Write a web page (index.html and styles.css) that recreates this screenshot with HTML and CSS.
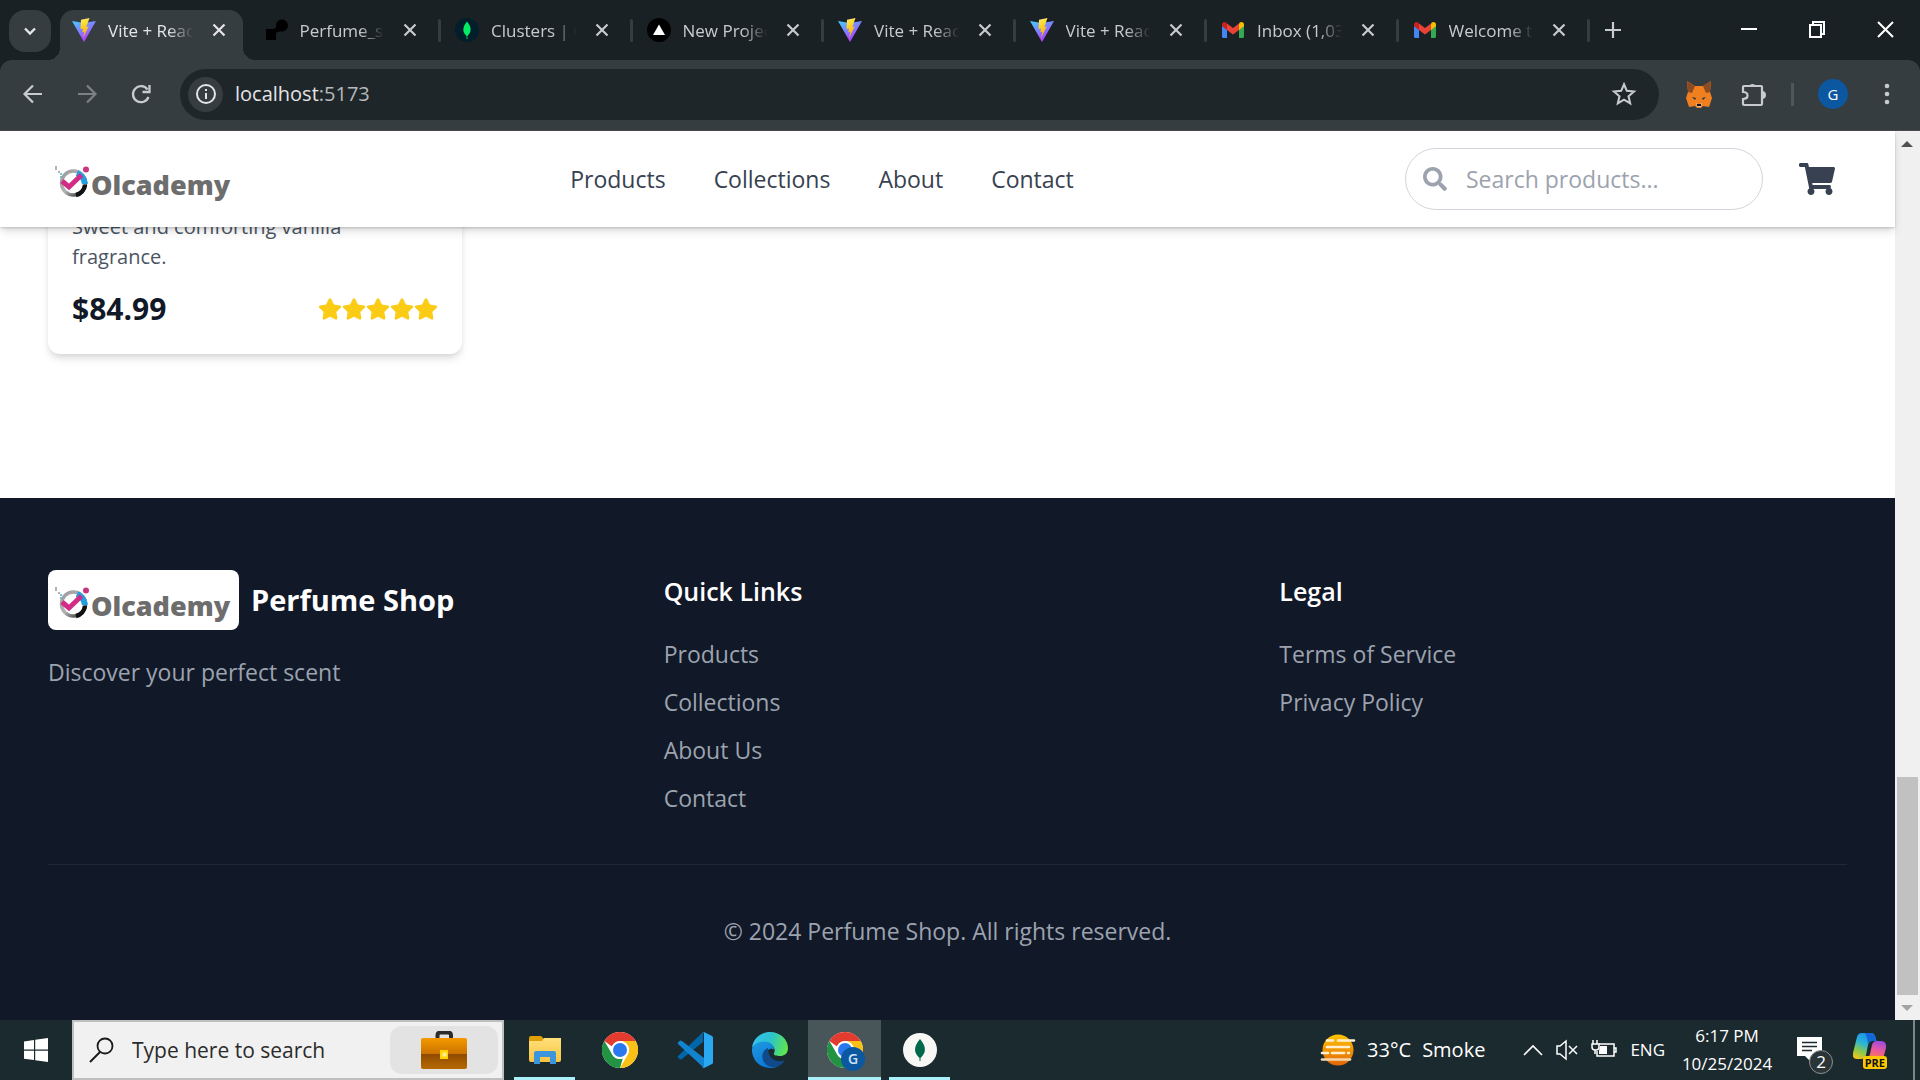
FILE: index.html
```html
<!DOCTYPE html>
<html lang="en">
<head>
<meta charset="utf-8">
<title>Perfume Shop</title>
<link rel="stylesheet" href="styles.css">
</head>
<body>
<svg class="sprite" aria-hidden="true">
  <defs>
    <linearGradient id="vite-a" x1="0" y1="0" x2="0.6" y2="1"><stop offset="0" stop-color="#41d1ff"/><stop offset="1" stop-color="#bd34fe"/></linearGradient>
    <linearGradient id="vite-b" x1="0.4" y1="0" x2="0.6" y2="1"><stop offset="0" stop-color="#ffea83"/><stop offset="0.2" stop-color="#ffdd35"/><stop offset="1" stop-color="#ffa800"/></linearGradient>
    <linearGradient id="case-a" x1="0" y1="0" x2="0" y2="1"><stop offset="0" stop-color="#f59a00"/><stop offset="1" stop-color="#c46d00"/></linearGradient>
    <linearGradient id="case-b" x1="0" y1="0" x2="0" y2="1"><stop offset="0" stop-color="#8f4a00"/><stop offset="1" stop-color="#b86a00"/></linearGradient>
    <linearGradient id="folder" x1="0" y1="0" x2="0" y2="1"><stop offset="0" stop-color="#ffe07a"/><stop offset="1" stop-color="#f8c441"/></linearGradient>
    <linearGradient id="edge-a" x1="0" y1="0.3" x2="1" y2="0.5"><stop offset="0" stop-color="#35c1f1"/><stop offset="0.5" stop-color="#2cc3cb"/><stop offset="1" stop-color="#5fe64b"/></linearGradient>
    <linearGradient id="edge-b" x1="0" y1="0" x2="0.5" y2="1"><stop offset="0" stop-color="#1f9ae0"/><stop offset="1" stop-color="#0b78d4"/></linearGradient>
    <linearGradient id="sun" x1="0" y1="0" x2="0" y2="1"><stop offset="0" stop-color="#ffc400"/><stop offset="1" stop-color="#e2660a"/></linearGradient>
    <linearGradient id="cop-a" x1="0.6" y1="0" x2="0.2" y2="1"><stop offset="0" stop-color="#1b8fe8"/><stop offset="0.4" stop-color="#2cb5d8"/><stop offset="0.7" stop-color="#8cc84b"/><stop offset="1" stop-color="#f3c51c"/></linearGradient>
    <linearGradient id="cop-b" x1="0.6" y1="0" x2="0.3" y2="1"><stop offset="0" stop-color="#a04be0"/><stop offset="0.5" stop-color="#ec5a9a"/><stop offset="1" stop-color="#f98048"/></linearGradient>
    <linearGradient id="ring" x1="0" y1="0" x2="1" y2="1"><stop offset="0" stop-color="#9a9a9a"/><stop offset="0.5" stop-color="#b4b4b4"/><stop offset="1" stop-color="#1a1a1a"/></linearGradient>
  </defs>
  <symbol id="i-vite" viewBox="0 0 24 24">
    <path d="M0 3 12 5 24 3 12 24z" fill="url(#vite-a)"/>
    <path d="M17.500 0 9 1.700 8.500 11 11 10.500 10.300 14.200 12.300 13.700 11.200 19.500 16.700 8.500 14.300 9z" fill="url(#vite-b)"/>
  </symbol>
  <symbol id="i-render" viewBox="0 0 24 24"><path d="M2 11h7c2 0 3-1 3-3a6 6 0 1 1 5.500 5.500C14 13.500 12 14 12 17v5H2z" fill="#000"/></symbol>
  <symbol id="i-leaf" viewBox="0 0 24 24"><circle cx="12" cy="12" r="12" fill="#021e2b"/><path d="M12 3.500c5 6 4.500 11 .4 14.500V21h-.8v-3C7.500 14.500 7 9.500 12 3.500z" fill="#00ed64"/></symbol>
  <symbol id="i-vercel" viewBox="0 0 24 24"><circle cx="12" cy="12" r="12" fill="#000"/><path d="M12 6.500 18 17H6z" fill="#fff"/></symbol>
  <symbol id="i-gmail" viewBox="0 0 24 24">
    <path d="M1 7v11.500c0 .8.700 1.500 1.500 1.500H6V9z" fill="#4285f4"/><path d="M18 20h3.500c.8 0 1.500-.7 1.500-1.500V7l-5 3z" fill="#34a853"/>
    <path d="M18 6v6l5-3.700V6.500c0-2.300-2.500-3.300-4.300-2z" fill="#fbbc04"/><path d="M6 12V5.500L12 10l6-4.500V12l-6 4.500z" fill="#ea4335"/><path d="M1 6.500v1.800L6 12V5.500l-1-.9C3.300 3.200 1 4.300 1 6.500z" fill="#c5221f"/>
  </symbol>
  <symbol id="i-x" viewBox="0 0 24 24"><path d="M6.500 6.500 17.500 17.500M17.500 6.500 6.500 17.500" stroke="currentColor" stroke-width="2.200" fill="none"/></symbol>
  <symbol id="i-star" viewBox="0 0 576 512"><path fill="currentColor" d="M259.300 17.800 194 150.200 47.900 171.500c-26.200 3.800-36.700 36.100-17.700 54.600l105.700 103-25 145.500c-4.500 26.300 23.200 46 46.400 33.700L288 439.600l130.700 68.700c23.200 12.200 50.900-7.400 46.400-33.700l-25-145.500 105.700-103c19-18.500 8.500-50.800-17.700-54.600L382 150.200 316.700 17.800c-11.700-23.600-45.600-23.900-57.400 0z"/></symbol>
  <symbol id="i-chrome" viewBox="0 0 36 36">
    <circle cx="18" cy="18" r="18" fill="#fff"/>
    <path d="M18 0a18 18 0 0 1 15.600 9H18a9 9 0 0 0-8 5.500L2.400 9A18 18 0 0 1 18 0z" fill="#e33b2e"/>
    <path d="M2.400 9 10.200 22.500A9 9 0 0 0 18 27c1 0 2-.2 2.800-.4L18 36A18 18 0 0 1 2.400 9z" fill="#229342"/>
    <path d="M33.600 9A18 18 0 0 1 18 36l7.800-13.500A9 9 0 0 0 18 9z" fill="#fbc016"/>
    <circle cx="18" cy="18" r="9" fill="#fff"/><circle cx="18" cy="18" r="7" fill="#2a78ee"/>
  </symbol>
  <symbol id="i-brand" viewBox="0 0 191 60">
    <path d="M8 17v4M11 22v2" stroke="#999" stroke-width="1.500"/><path d="M12 28h3M12 25h2" stroke="#36b7d8" stroke-width="1.500"/>
    <circle cx="25.500" cy="34" r="12" fill="#fff" stroke="url(#ring)" stroke-width="3.500"/>
    <path d="M29 24q7 3 8 11" stroke="#229fe0" stroke-width="6" fill="none"/>
    <path d="M37 36a12 12 0 0 1-9 10" stroke="#111" stroke-width="4.500" fill="none"/>
    <path d="M14 32 21 38 33.500 26" stroke="#d32c86" stroke-width="5" fill="none"/><circle cx="38" cy="20.500" r="3" fill="#c9367f"/>
    <text x="43" y="46" class="brand-text">Olcademy</text>
  </symbol>
</svg>

<div class="screen">
  <header class="tabstrip">
    <button class="tab-search" aria-label="Search tabs"><svg width="24" height="24" viewBox="0 0 24 24"><path d="m7 9.500 5 5 5-5" fill="none" stroke="#e3e5e6" stroke-width="2.400"/></svg></button>
    <div class="tabs">
      <div class="tab tab-active"><svg class="fav"><use href="#i-vite"/></svg><span class="tab-title">Vite + Reac</span><button class="tab-close" aria-label="Close"><svg><use href="#i-x"/></svg></button></div>
      <div class="tab"><svg class="fav"><use href="#i-render"/></svg><span class="tab-title">Perfume_sh</span><button class="tab-close" aria-label="Close"><svg><use href="#i-x"/></svg></button></div>
      <div class="tab"><svg class="fav"><use href="#i-leaf"/></svg><span class="tab-title">Clusters | C</span><button class="tab-close" aria-label="Close"><svg><use href="#i-x"/></svg></button></div>
      <div class="tab"><svg class="fav"><use href="#i-vercel"/></svg><span class="tab-title">New Projec</span><button class="tab-close" aria-label="Close"><svg><use href="#i-x"/></svg></button></div>
      <div class="tab"><svg class="fav"><use href="#i-vite"/></svg><span class="tab-title">Vite + Reac</span><button class="tab-close" aria-label="Close"><svg><use href="#i-x"/></svg></button></div>
      <div class="tab"><svg class="fav"><use href="#i-vite"/></svg><span class="tab-title">Vite + Reac</span><button class="tab-close" aria-label="Close"><svg><use href="#i-x"/></svg></button></div>
      <div class="tab"><svg class="fav"><use href="#i-gmail"/></svg><span class="tab-title">Inbox (1,03</span><button class="tab-close" aria-label="Close"><svg><use href="#i-x"/></svg></button></div>
      <div class="tab"><svg class="fav"><use href="#i-gmail"/></svg><span class="tab-title">Welcome t</span><button class="tab-close" aria-label="Close"><svg><use href="#i-x"/></svg></button></div>
    </div>
    <button class="tab-new" aria-label="New tab"><svg width="24" height="24" viewBox="0 0 24 24"><path d="M12 4v16M4 12h16" stroke="#c7cbcd" stroke-width="2.200"/></svg></button>
    <div class="win-controls">
      <button aria-label="Minimize"><svg width="24" height="24" viewBox="0 0 24 24"><path d="M4 12h16" stroke="#fff" stroke-width="2"/></svg></button>
      <button aria-label="Restore"><svg width="24" height="24" viewBox="0 0 24 24"><path d="M5 8h11v12H5zM8 8V5h11v12h-3" fill="none" stroke="#fff" stroke-width="2"/></svg></button>
      <button aria-label="Close window"><svg width="24" height="24" viewBox="0 0 24 24"><path d="m5 5 15 15M20 5 5 20" stroke="#fff" stroke-width="2"/></svg></button>
    </div>
  </header>

  <div class="toolbar-back">
  <div class="toolbar">
    <button class="tool" aria-label="Back"><svg width="24" height="24" viewBox="0 0 24 24"><path d="M21 12H4M12 3.500 3.500 12l8.500 8.500" fill="none" stroke="#c7cbcd" stroke-width="2.200"/></svg></button>
    <button class="tool" aria-label="Forward"><svg width="24" height="24" viewBox="0 0 24 24"><path d="M3 12h17M12 3.500 20.500 12 12 20.500" fill="none" stroke="#7c8183" stroke-width="2.200"/></svg></button>
    <button class="tool" aria-label="Reload"><svg width="24" height="24" viewBox="0 0 24 24"><path d="M19.500 15A8 8 0 1 1 18.500 7.500M20.500 3v7h-7" fill="none" stroke="#c7cbcd" stroke-width="2.300"/></svg></button>
    <div class="omnibox">
      <button class="site-info" aria-label="Site information"><svg width="24" height="24" viewBox="0 0 24 24"><circle cx="12" cy="12" r="9" fill="none" stroke="#e3e5e6" stroke-width="2"/><path d="M12 11v6M12 7v2" stroke="#e3e5e6" stroke-width="2"/></svg></button>
      <span class="url">localhost<span class="port">:5173</span></span>
      <button class="bookmark" aria-label="Bookmark"><svg width="26" height="26" viewBox="0 0 24 24"><path d="m12 3 2.600 6.100 6.600.6-5 4.400 1.500 6.500L12 17.200l-5.700 3.400 1.500-6.500-5-4.400 6.600-.6z" fill="none" stroke="#c7cbcd" stroke-width="1.900"/></svg></button>
    </div>
    <button class="tool ext" aria-label="Wallet"><svg width="26" height="28" viewBox="0 0 26 28"><path d="m1 1 8 5h8l8-5-1 11 2 6-3 9-6-1-2 2h-4l-2-2-6 1-3-9 2-6z" fill="#f0801f"/><path d="m1 1 8 5-3 7-4-1zM25 1l-8 5 3 7 4-1z" fill="#8e4a20"/><path d="m6 17 4 1-1 2zM20 17l-4 1 1 2z" fill="#233447"/><path d="m10 23 1 4h4l1-4-2 1h-2z" fill="#d5bfb2"/><path d="M11 24h4v2h-4z" fill="#161616"/></svg></button>
    <button class="tool ext" aria-label="Extensions"><svg width="28" height="28" viewBox="0 0 28 28"><path d="M5 6h17q1 0 1 1v17q0 1-1 1H5q-1 0-1-1v-5c6 0 6-7 0-7V7q0-1 1-1z" fill="none" stroke="#c7cbcd" stroke-width="2.200"/><path d="M10 6a4 4 0 0 1 7 0zM23 11a4 4 0 0 1 0 8z" fill="#c7cbcd"/></svg></button>
    <span class="tool-sep"></span>
    <button class="avatar" aria-label="Profile">G</button>
    <button class="tool kebab" aria-label="Menu"><svg width="6" height="22" viewBox="0 0 6 22"><g fill="#c7cbcd"><circle cx="3" cy="3" r="2.300"/><circle cx="3" cy="11" r="2.300"/><circle cx="3" cy="19" r="2.300"/></g></svg></button>
  </div>
  </div>

  <div class="window">
    <div class="page">
      <nav class="nav">
        <svg class="brand" role="img" aria-label="Olcademy"><use href="#i-brand"/></svg>
        <div class="nav-links"><a href="#">Products</a><a href="#">Collections</a><a href="#">About</a><a href="#">Contact</a></div>
        <div class="nav-actions">
          <label class="search">
            <svg width="24" height="24" viewBox="0 0 512 512"><path fill="#9ca3af" d="M505 442.700 405.300 343c-4.500-4.500-10.600-7-17-7H372c27.600-35.300 44-79.700 44-128C416 93.100 322.900 0 208 0S0 93.100 0 208s93.100 208 208 208c48.300 0 92.700-16.400 128-44v16.300c0 6.400 2.500 12.500 7 17l99.700 99.700c9.400 9.400 24.600 9.400 33.900 0l28.300-28.300c9.400-9.400 9.400-24.600.1-34zM208 336c-70.700 0-128-57.200-128-128 0-70.700 57.200-128 128-128 70.700 0 128 57.200 128 128 0 70.700-57.200 128-128 128z"/></svg>
            <input type="text" placeholder="Search products..." aria-label="Search products">
          </label>
          <button class="cart" aria-label="Cart"><svg width="36" height="32" viewBox="0 0 576 512"><path fill="#374151" d="m528.100 301.300 47.300-208C578.800 78.300 567.400 64 552 64H159.200l-9.200-44.800C147.800 8 137.900 0 126.500 0H24C10.700 0 0 10.700 0 24v16c0 13.300 10.700 24 24 24h69.900l70.200 343.400C147.300 417.100 136 435.200 136 456c0 30.900 25.100 56 56 56s56-25.100 56-56c0-15.700-6.400-29.800-16.800-40h209.600C430.400 426.200 424 440.300 424 456c0 30.900 25.100 56 56 56s56-25.100 56-56c0-22.200-12.900-41.300-31.600-50.400l5.500-24.300c3.400-15-8-29.300-23.400-29.300H218.100l-6.500-32h293.100c11.200 0 20.900-7.800 23.400-18.700z"/></svg></button>
        </div>
      </nav>

      <main class="products">
        <article class="card">
          <p class="card-text">Sweet and comforting vanilla fragrance.</p>
          <div class="card-row">
            <span class="price">$84.99</span>
            <span class="stars"><svg><use href="#i-star"/></svg><svg><use href="#i-star"/></svg><svg><use href="#i-star"/></svg><svg><use href="#i-star"/></svg><svg><use href="#i-star"/></svg></span>
          </div>
        </article>
      </main>

      <footer class="footer">
        <div class="footer-grid">
          <div>
            <div class="footer-brand"><svg class="brand brand-box" role="img" aria-label="Olcademy"><use href="#i-brand"/></svg><h2>Perfume Shop</h2></div>
            <p class="tagline">Discover your perfect scent</p>
          </div>
          <div>
            <h3>Quick Links</h3>
            <ul><li><a href="#">Products</a></li><li><a href="#">Collections</a></li><li><a href="#">About Us</a></li><li><a href="#">Contact</a></li></ul>
          </div>
          <div>
            <h3>Legal</h3>
            <ul><li><a href="#">Terms of Service</a></li><li><a href="#">Privacy Policy</a></li></ul>
          </div>
        </div>
        <p class="copyright">© 2024 Perfume Shop. All rights reserved.</p>
      </footer>
    </div>
    <div class="scrollbar" aria-hidden="true">
      <svg width="25" height="25" viewBox="0 0 25 25"><path d="m12 10 6 6H6z" fill="#505050"/></svg>
      <div class="track"><div class="thumb"></div></div>
      <svg width="25" height="25" viewBox="0 0 25 25"><path d="M6 10h12l-6 6z" fill="#a3a3a3"/></svg>
    </div>
  </div>

  <div class="taskbar">
    <button class="start" aria-label="Start"><svg width="26" height="26" viewBox="0 0 26 26"><path d="M1 4.500 11 3v9.500H1zM12.200 2.800 25 1v11.500H12.200zM1 13.700h10V23L1 21.700zM12.200 13.700H25V25l-12.800-1.800z" fill="#fff"/></svg></button>
    <div class="task-search">
      <svg width="26" height="26" viewBox="0 0 26 26"><circle cx="17" cy="9" r="7.500" fill="none" stroke="#1a1a1a" stroke-width="1.800"/><path d="M12 15 2 25" stroke="#1a1a1a" stroke-width="2"/></svg>
      <input type="text" placeholder="Type here to search" aria-label="Type here to search">
      <button class="highlight" aria-label="Search highlights"><svg width="46" height="38" viewBox="0 0 46 38"><path d="M16.500 8V4q0-2.500 3-2.500h7.500q3 0 3 2.500v4" fill="none" stroke="#2b2b2b" stroke-width="4"/><rect y="7" width="46" height="18" rx="2" fill="url(#case-a)"/><path d="M0 23h46v13q0 2-2 2H2q-2 0-2-2z" fill="url(#case-b)"/><rect x="19" y="19" width="8" height="9" fill="#ffd400"/><rect x="21.500" y="21.500" width="4" height="4" fill="#ffef9a"/></svg></button>
    </div>
    <div class="apps">
      <button class="app app-open" aria-label="File Explorer"><svg width="32" height="28" viewBox="0 0 32 28"><path d="M0 2q0-2 2-2h10l3 3v4H0z" fill="#e0a008"/><path d="M0 5h13l2-3h17v22q0 2-2 2H2q-2 0-2-2z" fill="url(#folder)"/><path d="M5 28V17q0-2 2-2h18q2 0 2 2v11h-6v-7H11v7z" fill="#3b96de"/></svg></button>
      <button class="app" aria-label="Chrome"><svg width="36" height="36"><use href="#i-chrome"/></svg></button>
      <button class="app" aria-label="Visual Studio Code"><svg width="36" height="36" viewBox="0 0 36 36"><path d="M1 24 26 0v10L5 27q-1.500 1-2.500 0l-1.500-1.500q-.8-.8 0-1.500z" fill="#0065a9"/><path d="M1 12q-.8-.8 0-1.500L2.500 9Q3.500 8 5 9l22 17v10z" fill="#1284cf"/><path d="M26 0q.5-.3 1 0l8 4q1 .5 1 1.500v25q0 1-1 1.500l-8 4q-1 .3-2-.5 2 .5 2-1.500V2q0-1.500-1-2z" fill="#2aa9f2"/></svg></button>
      <button class="app" aria-label="Edge"><svg width="36" height="36" viewBox="0 0 36 36"><path d="M0 16C1 6 9 0 18 0c11 0 18 8 18 16 0 6-4 8-8 8-4 0-7-1-6-3 2-3 0-10-9-10C7 11 2 13 0 16z" fill="url(#edge-a)"/><path d="M0 17C1 13 6 9.500 12 9.500c7 0 10 4 10 8-3-2-8 0-8 6s5 11 12 11c-3 1.500-5 1.500-8 1.500A18 18 0 0 1 0 17z" fill="url(#edge-b)"/><path d="M16 16c-8 3-8 16 3 19 6 1 11-2 14-7-6 3-17 1-17-12z" fill="#114a8b"/></svg></button>
      <button class="app app-active" aria-label="Chrome, profile G"><svg width="36" height="36"><use href="#i-chrome"/></svg><span class="app-badge">G</span></button>
      <button class="app app-open" aria-label="MongoDB Compass"><svg width="34" height="34" viewBox="0 0 34 34"><circle cx="17" cy="17" r="17" fill="#f7f7f5"/><path d="M17 6c7 8 6 14 .5 19v3h-1v-3C11 20 10 14 17 6z" fill="#00684a"/></svg></button>
    </div>
    <div class="tray">
      <button class="weather"><svg width="36" height="32" viewBox="0 0 36 32"><circle cx="18" cy="16" r="15.500" fill="url(#sun)"/><g stroke="#fff0cf" stroke-width="2.600" stroke-linecap="round"><path d="M7 6.500h6M18 6.500h16M7 13h22M12 19h12M28 19h1M2 19h6"/></g><path d="M2 25.500h28" stroke="#f5d7ae" stroke-width="2.600" stroke-linecap="round"/></svg><span>33°C</span><span>Smoke</span></button>
      <div class="tray-icons">
        <svg width="20" height="14" viewBox="0 0 20 14"><path d="m1 12 9-9 9 9" fill="none" stroke="#fff" stroke-width="1.600"/></svg>
        <svg width="22" height="22" viewBox="0 0 22 22"><path d="M1 7h3l6-5v18l-6-5H1zM13 7l8 8M21 7l-8 8" fill="none" stroke="#fff" stroke-width="1.500"/></svg>
        <svg width="26" height="22" viewBox="0 0 26 22"><path d="M8 5h15v12H6v-5M23 9h2v4h-2" fill="none" stroke="#fff" stroke-width="1.500"/><path d="M9 7h7v8H8v-3z" fill="#fff"/><path d="M2 1v4M6 1v4M1 5h7v3q0 3-3 3H4q-3 0-3-3zM4 11v4" fill="none" stroke="#fff" stroke-width="1.500"/></svg>
        <span>ENG</span>
      </div>
      <div class="clock"><span>6:17 PM</span><span>10/25/2024</span></div>
      <button class="notif" aria-label="Notifications"><svg width="26" height="26" viewBox="0 0 26 26"><path d="M0 0h25v19H14v6l-6-6H0z" fill="#fff"/><path d="M5 5.500h15M5 9.500h15M5 13.500h10" stroke="#1c2a2e" stroke-width="1.500"/></svg><span class="notif-count">2</span></button>
      <button class="copilot" aria-label="Copilot"><svg width="34" height="34" viewBox="0 0 34 34"><path d="M9 0h9q3 0 4 3l1.500 5H19q-3 0-4 4l-2 10q-1 4-5 4H4q-5 0-4-6L4 4q1-4 5-4z" fill="url(#cop-a)"/><path d="M12 0h6q3 0 4 3l1.500 5H19q-3 0-4 3-1-8-3-11z" fill="#1268d6"/><path d="M24 8h4q6 0 5 7l-3 11H13q3-1 4-5l2-9q1-4 5-4z" fill="url(#cop-b)"/></svg><span class="pre">PRE</span></button>
      <span class="show-desktop"></span>
    </div>
  </div>
</div>
</body>
</html>
```
FILE: styles.css
```css
* { box-sizing: border-box; }
body, h2, h3, p, ul { margin: 0; padding: 0; }
ul { list-style: none; }
a { color: inherit; text-decoration: none; }
button { border: 0; padding: 0; margin: 0; background: none; color: inherit; font: inherit; display: flex; align-items: center; justify-content: center; flex: none; }
input { font: inherit; color: inherit; border: 0; padding: 0; background: none; outline: 0; min-width: 0; }
svg { display: block; flex: none; }
body { font-family: "Open Sans", "Noto Sans", sans-serif; font-size: 23px; line-height: 36px; background: #fff; }
.sprite { position: absolute; width: 0; height: 0; }
.screen { display: flex; flex-direction: column; height: 100vh; overflow: hidden; }

/* tab strip */
.tabstrip { display: flex; height: 60px; flex: none; background: #1a2124; padding-left: 9px; font-size: 17px; color: #c7cbcd; }
.tab-search { width: 42px; height: 42px; margin: 10px 9px 0 0; border-radius: 16px; background: #363d40; }
.tabs { display: grid; grid-template-columns: repeat(8, minmax(0, 1fr)); width: 1532px; }
.tab { position: relative; display: flex; align-items: center; height: 40px; margin-top: 10px; padding: 0 21px 0 12px; }
.tab::after { content: ""; position: absolute; right: 2px; top: 9px; width: 3px; height: 23px; border-radius: 2px; background: #363d40; }
.fav { width: 24px; height: 24px; }
.tab-title { flex: 1; min-width: 0; margin-left: 12px; height: 24px; line-height: 26px; white-space: nowrap; overflow: hidden; -webkit-mask-image: linear-gradient(90deg, #000 68%, transparent 96%); mask-image: linear-gradient(90deg, #000 68%, transparent 96%); }
.tab-close { width: 24px; height: 24px; margin-left: 10px; }
.tab-close svg { width: 24px; height: 24px; }
.tab-active { height: 50px; margin-right: 9px; padding: 0 12px 10px; border-radius: 14px 14px 0 0; background: #363d40; color: #e3e5e6; }
.tab-active::before, .tab-active::after { content: ""; position: absolute; top: auto; bottom: 0; width: 12px; height: 12px; border-radius: 0; }
.tab-active::before { left: -12px; background: radial-gradient(circle at 0 0, transparent 12px, #363d40 12px); }
.tab-active::after { right: -12px; background: radial-gradient(circle at 100% 0, transparent 12px, #363d40 12px); }
.tab-new { width: 42px; height: 60px; }
.win-controls { display: flex; margin-left: auto; padding-right: 1px; }
.win-controls button { width: 68px; height: 58px; }

/* toolbar */
.toolbar-back { background: #1a2124; flex: none; }
.toolbar { display: flex; align-items: center; height: 71px; padding: 0 16px 2px 6px; background: #363d40; border-bottom: 1px solid #4a4a4c; border-radius: 12px 12px 0 0; }
.tool { width: 54px; height: 48px; }
.omnibox { display: flex; align-items: center; flex: 1; height: 51px; margin: 0 13px 0 12px; padding: 0 22px 0 8px; border-radius: 26px; background: #1f2629; color: #e3e5e6; font-size: 20px; }
.site-info { width: 35px; height: 35px; margin-right: 12px; border-radius: 50%; background: #363d40; }
.port { color: #b5b9bb; }
.bookmark { margin-left: auto; }
.tool-sep { width: 3px; height: 23px; margin: 0 24px 0 11px; background: #50575a; }
.avatar { width: 30px; height: 30px; border-radius: 50%; background: #0b57a0; color: #fff; font-size: 15px; }
.kebab { width: 34px; margin-left: 22px; }

/* browser window */
.window { display: flex; flex: 1; min-height: 0; }
.page { display: flex; flex-direction: column; flex: 1; min-width: 0; }
.nav { position: relative; z-index: 1; display: flex; justify-content: space-between; align-items: center; height: 96px; flex: none; padding: 0 48px; background: #fff; box-shadow: 0 6px 9px -1px rgba(0,0,0,.1), 0 3px 6px -2px rgba(0,0,0,.1), 0 1px 2px rgba(0,0,0,.15); }
.brand { width: 191px; height: 60px; }
.brand-box { background: #fff; border-radius: 8px; }
.brand-text { font-family: "Open Sans", sans-serif; font-weight: 800; font-size: 27px; fill: #6d6d6d; }
.nav-links { display: flex; gap: 48px; color: #374151; }
.nav-actions { display: flex; align-items: center; gap: 24px; }
.search { display: flex; align-items: center; gap: 19px; width: 358px; height: 62px; padding: 0 17px; border: 1px solid #d1d5db; border-radius: 31px; }
.search input { flex: 1; }
.search input::placeholder { color: #9ca3af; opacity: 1; }
.cart { width: 60px; height: 60px; }

.products { display: flex; flex-direction: column; justify-content: flex-end; flex: 1; min-height: 0; overflow: hidden; padding: 0 48px 144px; }
.card { width: 414px; padding: 24px; border-radius: 12px; background: #fff; box-shadow: 0 6px 9px -1px rgba(0,0,0,.1), 0 3px 6px -2px rgba(0,0,0,.1); }
.card-text { max-width: 320px; margin-bottom: 16px; color: #4b5563; font-size: 20px; line-height: 30px; }
.card-row { display: flex; justify-content: space-between; align-items: center; }
.price { color: #111827; font-size: 30px; line-height: 42px; font-weight: 700; }
.stars { display: flex; color: #facc15; }
.stars svg { width: 24px; height: 22px; }

.footer { flex: none; padding: 72px 48px 71px; background: #111827; color: #9ca3af; }
.footer-grid { display: grid; grid-template-columns: repeat(3, 1fr); gap: 48px; }
.footer-brand { display: flex; align-items: center; gap: 12px; margin-bottom: 24px; color: #fff; }
.footer h2 { font-size: 29px; line-height: 42px; font-weight: 700; }
.footer h3 { margin-bottom: 24px; color: #fff; font-size: 25px; line-height: 42px; font-weight: 600; }
.footer ul { display: flex; flex-direction: column; gap: 12px; }
.footer a { display: inline-block; height: 36px; vertical-align: top; }
.copyright { margin-top: 48px; padding-top: 48px; border-top: 1px solid #1f2937; text-align: center; }

.scrollbar { display: flex; flex-direction: column; width: 25px; flex: none; background: #f0f0f0; }
.track { display: flex; flex-direction: column; justify-content: flex-end; flex: 1; padding: 0 2px; }
.thumb { height: 26%; background: #c1c1c1; }

/* taskbar */
.taskbar { display: flex; height: 60px; flex: none; background: #1b2a2e; color: #fff; line-height: 28px; }
.start { width: 72px; height: 60px; }
.task-search { display: flex; align-items: center; width: 432px; height: 60px; padding: 0 4px 0 14px; border: 2px solid #bfbfbf; background: #f1f1f1; color: #2b2b2b; font-size: 21px; }
.task-search input { flex: 1; margin-left: 18px; }
.task-search input::placeholder { color: #2b2b2b; opacity: 1; }
.highlight { width: 108px; height: 48px; border-radius: 12px; background: #e3e3e3; }
.apps { display: flex; padding-left: 3px; }
.app { position: relative; width: 75px; height: 60px; }
.app-open::after, .app-active::after { content: ""; position: absolute; left: 7px; right: 7px; bottom: 0; height: 3px; background: #a9f0fb; }
.app-active { background: linear-gradient(90deg, #1b2a2e 1px, #495659 1px 74px, #1b2a2e 74px); }
.app-active::after { left: 1px; right: 1px; }
.app-badge { position: absolute; left: 34px; top: 27px; width: 24px; height: 24px; border-radius: 50%; background: #0b57a0; color: #cfe3f7; font-size: 14px; line-height: 24px; font-weight: 600; }
.tray { display: flex; align-items: center; margin-left: auto; font-size: 20px; }
.weather { gap: 11px; margin-right: 38px; }
.tray-icons { display: flex; align-items: center; gap: 13px; font-size: 17px; }
.clock { display: flex; flex-direction: column; align-items: center; width: 94px; margin: 0 23px 0 15px; font-size: 17px; }
.notif { position: relative; width: 36px; height: 48px; justify-content: flex-start; }
.notif-count { position: absolute; left: 12px; top: 24px; width: 24px; height: 24px; border: 1px solid #8a9194; border-radius: 50%; background: #2b3436; font-size: 17px; line-height: 22px; }
.copilot { position: relative; margin-left: 20px; }
.pre { position: absolute; right: 0; bottom: -2px; padding: 0 2px; border-radius: 3px; background: #ffc800; color: #111; font-size: 11px; line-height: 13px; font-weight: 700; }
.show-desktop { width: 7px; height: 60px; margin-left: 26px; border-left: 2px solid #7d8587; }
```
